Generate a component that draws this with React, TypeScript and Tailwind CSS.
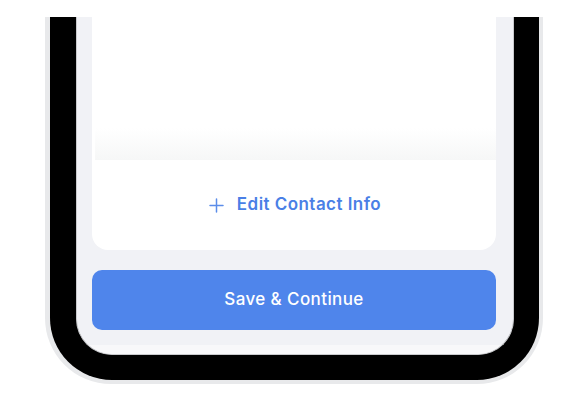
import React from "react";

export default function App() {
  return (
    <div className="w-[584px] h-[412px] bg-white overflow-hidden" style={{ fontFamily: "Inter, 'Noto Sans', sans-serif" }}>
      <div className="ml-[45px] mt-[17px] w-[498px] bg-[#e8e9eb] pl-[5px] pr-[4px] pb-[4px] rounded-b-[66px]">
        <div className="bg-black pl-[26px] pr-[25px] pb-[25px] rounded-b-[62px]">
          <div className="bg-[#f1f2f6] border-x border-b border-[#c9cacd] rounded-b-[36px] overflow-hidden flex flex-col">
            <div className="pl-[15px] pr-[17px] flex flex-col">
              <div className="bg-white rounded-b-[16px] h-[233px] flex flex-col">
                <div className="h-[111px]" />
                <div className="ml-[3px] h-[32px] bg-gradient-to-b from-white to-[#f6f7f7]" />
                <div className="flex-1 flex items-center justify-center gap-[13px] pl-[2px]">
                  <svg width="15" height="15" viewBox="0 0 15 15" className="text-[#5b8de9]">
                    <path d="M7.5 1v13M1 7.5h13" stroke="currentColor" strokeWidth="1.5" strokeLinecap="round" />
                  </svg>
                  <span className="text-[#4a7fe6] text-[17px] font-semibold tracking-[0.45px]">Edit Contact Info</span>
                </div>
              </div>
              <div className="h-[20px]" />
              <button className="h-[60px] bg-[#4f85eb] rounded-[10px] text-white text-[17px] font-medium tracking-[0.4px] flex items-center justify-center">
                Save &amp; Continue
              </button>
            </div>
            <div className="h-[15px]" />
            <div className="h-[9px] bg-[#f8f8fa]" />
          </div>
        </div>
      </div>
    </div>
  );
}
